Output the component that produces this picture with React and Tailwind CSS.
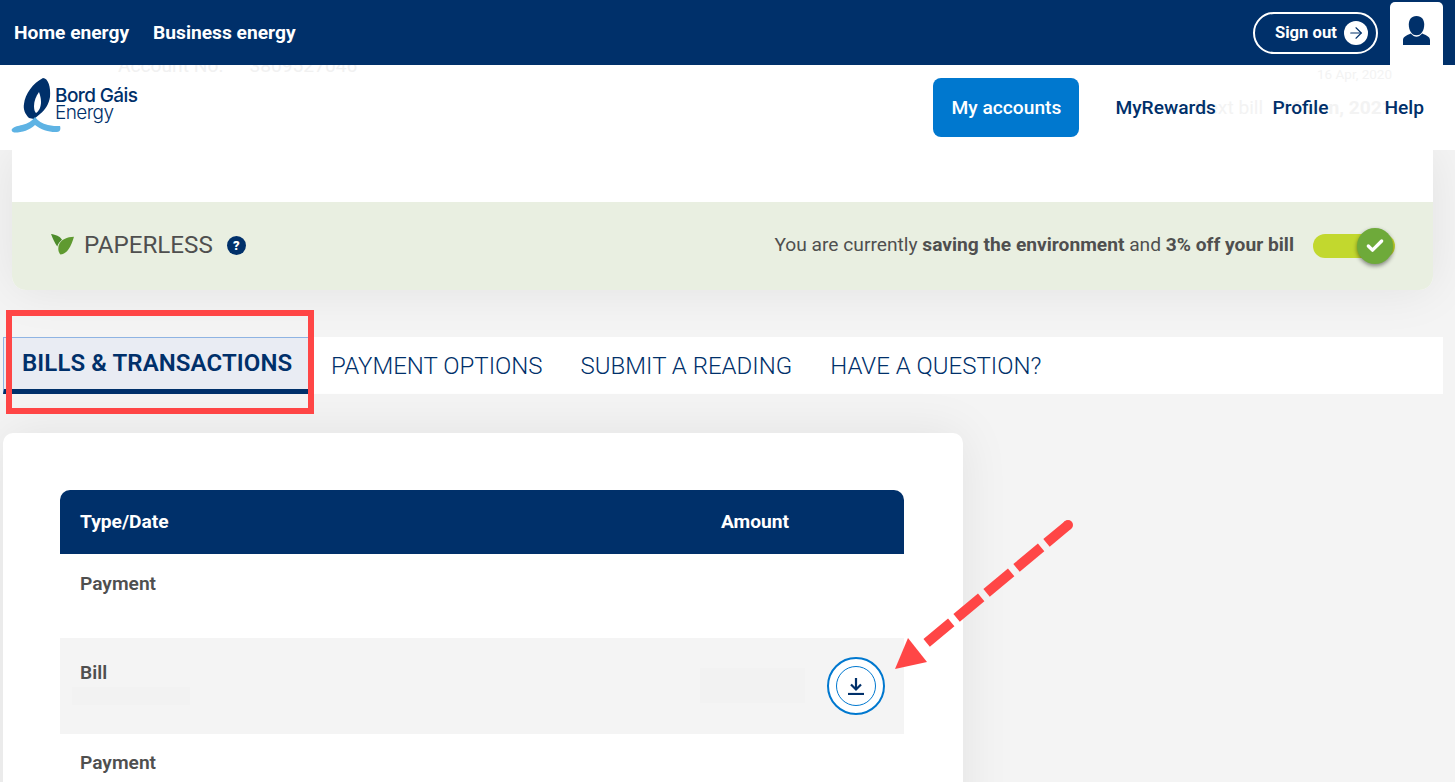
import { ArrowRight, Check } from "lucide-react";

const tabs = ["PAYMENT OPTIONS", "SUBMIT A READING", "HAVE A QUESTION?"];

function Logo() {
  return (
    <div className="relative -mt-[5px] h-[60px] w-[130px] shrink-0">
      <svg viewBox="0 0 56 60" className="h-[60px] w-[56px]">
        <path d="M33 3 C38 3 41 12 40 22 C39 29 35 35 30 39 L24 44 L19 43 C15 39 13 34 14 29 C15 19 23 8 33 3 Z" fill="#00306a" />
        <path d="M29 17 C26 21 24 26 24 31 C24 35 25 37 26 38 C29 36 31 32 31 27 C31 23 30 20 29 17 Z" fill="#fff" />
        <path d="M2 54 C5 51 8 51 12 50 C18 48.500 22 46 25 42 C28 46 32 48.500 38 50 C42 51 46 51 50 51 C51 54 50 57 47 57 C40 57.500 31 55 25 50 C20 55 12 57.500 5 57.500 C2 57.500 1 55 2 54 Z" fill="#5eb3e4" />
      </svg>
      <div className="absolute left-[45px] top-[11px] font-['Inter',sans-serif] text-[19px] leading-[19px] tracking-[-0.6px] text-[#00306a]">
        <div className="font-medium">Bord Gáis</div>
        <div className="-mt-[2px] font-light">Energy</div>
      </div>
    </div>
  );
}

function TopBar() {
  return (
    <div className="flex h-[65px] items-center justify-between bg-[#00306a] pl-[14px] pr-[12px]">
      <div className="flex gap-[24px] pt-[2px] text-[19.2px] font-bold text-white">
        <span>Home energy</span>
        <span>Business energy</span>
      </div>
      <div className="flex h-full items-center gap-[12px]">
        <div className="flex h-[42px] w-[125px] items-center justify-between rounded-full border-2 border-white pl-[20px] pr-[8px] text-[16.6px] font-bold text-white">
          <span className="pt-[2px]">Sign out</span>
          <span className="flex h-[24px] w-[24px] items-center justify-center rounded-full bg-white text-[#00306a]">
            <ArrowRight size={18} strokeWidth={1.5} />
          </span>
        </div>
        <div className="mt-[2px] flex h-[63px] w-[53px] justify-center rounded-t-[5px] bg-white pt-[14px]">
          <svg viewBox="0 0 28 30" className="h-[29px] w-[27px]" fill="#00306a">
            <path d="M14 0 C19.500 0 22 4 22 9 C22 14 19.500 20 14 20 C8.500 20 6 14 6 9 C6 4 8.500 0 14 0 Z" />
            <path d="M0 25 C0 21 4 20 8 18 C10 20 12 21.500 14 21.500 C16 21.500 18 20 20 18 C24 20 28 21 28 25 L28 30 L0 30 Z" />
          </svg>
        </div>
      </div>
    </div>
  );
}

function NavBar() {
  return (
    <div className="relative z-10 flex h-[85px] items-center justify-between overflow-hidden bg-white pl-[10px] pr-[31px] text-[19.2px] font-medium text-[#00306a]">
      <span className="absolute left-[118px] -top-[11px] text-[19.2px] leading-[24px] font-normal text-[#f1f1f1]">
        Account No.
        <span className="ml-[26px]">3809527046</span>
      </span>
      <span className="absolute left-[1317px] -top-[1px] text-[13.5px] font-normal text-[#f3f3f3]">16 Apr, 2020</span>
      <span className="absolute left-[1194px] top-[29px] font-normal text-[#f3f3f3]">
        Next bill
        <span className="ml-[17px] font-bold">16 Jun, 2021</span>
      </span>
      <Logo />
      <div className="relative flex items-center pt-[2px]">
        <span className="-mt-[2px] flex h-[59px] w-[146px] items-center justify-center rounded-[8px] bg-[#0078cf] pt-[2px] text-white">
          My accounts
        </span>
        <span className="ml-[36px] w-[157px]">MyRewards</span>
        <span className="w-[112px]">Profile</span>
        <span>Help</span>
      </div>
    </div>
  );
}

function PaperlessCard() {
  return (
    <div className="ml-[12px] w-[1421px] rounded-b-[14px] bg-white shadow-[0_0_50px_rgba(0,0,0,0.08)]">
      <div className="h-[52px]" />
      <div className="flex h-[88px] items-center justify-between rounded-b-[14px] bg-[#e9efe1] pl-[39px] pr-[38px]">
        <div className="-mt-[2px] flex items-center text-[24.2px] text-[#4f4f4f]">
          <svg viewBox="0 0 24 22" className="mr-[10px] h-[21px] w-[23px]">
            <path d="M0 0 C5 1 9 2 11.500 6 C9 8 7.500 10 6.500 13 C3.500 9 2 5 0 0 Z" fill="#4d8c2b" />
            <path d="M24 3 C17 3 10 6 8 12 C7 16 8 20 10 21.500 C17 21 21 13 24 3 Z" fill="#5f9a30" />
          </svg>
          <span>PAPERLESS</span>
          <span className="ml-[14px] mt-[2px] flex h-[19px] w-[19px] items-center justify-center rounded-full bg-[#00306a] text-[13px] font-black text-white">
            ?
          </span>
        </div>
        <div className="-mt-[2px] flex items-center text-[19.2px] text-[#4f4f4f]">
          <span>
            You are currently <b className="font-bold">saving the environment</b> and{" "}
            <b className="font-bold">3% off your bill</b>
          </span>
          <div className="relative ml-[19px] mt-[2px] h-[24px] w-[82px] rounded-full bg-[#c2d82e]">
            <span className="absolute -top-[6px] right-[2px] flex h-[36px] w-[36px] items-center justify-center rounded-full bg-[#6eaa3a] text-white shadow-[0_2px_4px_rgba(0,0,0,0.45)]">
              <Check size={20} strokeWidth={4} />
            </span>
          </div>
        </div>
      </div>
    </div>
  );
}

function Tabs() {
  return (
    <div className="ml-[3px] mt-[47px] flex h-[57px] w-[1440px] items-start bg-white text-[24px] font-light text-[#00306a]">
      <div className="flex h-[57px] w-[305px] items-center border-b-[5px] border-l border-t border-b-[#00306a] border-l-[#8fb4e3] border-t-[#8fb4e3] bg-[#e9ecf3] pb-[2px] pl-[18px] font-semibold tracking-[0.1px]">
        BILLS &amp; TRANSACTIONS
      </div>
      <div className="flex h-[56px] items-center gap-[38px] pl-[23px] pt-[2px]">
        {tabs.map((tab) => (
          <span key={tab}>{tab}</span>
        ))}
      </div>
    </div>
  );
}

function Transactions() {
  return (
    <div className="ml-[3px] mt-[39px] h-[400px] w-[960px] rounded-t-[10px] bg-white pl-[57px] pr-[59px] pt-[57px] text-[19.2px] shadow-[0_0_50px_rgba(0,0,0,0.08)]">
      <div className="flex h-[64px] items-center rounded-t-[10px] bg-[#00306a] pl-[20px] font-bold text-white">
        <span className="w-[641px]">Type/Date</span>
        <span>Amount</span>
      </div>
      <div className="h-[84px] pl-[20px] pt-[16px] font-semibold text-[#4f4f4f]">Payment</div>
      <div className="relative flex h-[96px] justify-between bg-[#f4f4f4] pl-[20px] pt-[21px] font-semibold text-[#4f4f4f]">
        <span>Bill</span>
        <span className="absolute left-[12px] top-[49px] h-[18px] w-[118px] bg-[#f2f2f2]" />
        <span className="absolute left-[640px] top-[30px] h-[35px] w-[105px] bg-[#f2f2f2]" />
        <div className="absolute left-[767px] top-[19px] flex h-[58px] w-[58px] items-center justify-center rounded-full border-2 border-[#0078cf] bg-white">
          <div className="flex h-[40px] w-[40px] items-center justify-center rounded-full border border-[#0078cf]">
            <svg viewBox="0 0 18 18" className="h-[18px] w-[18px]" fill="none" stroke="#00306a" strokeWidth="2.200">
              <path d="M9 1 V12" />
              <path d="M4 7.500 L9 12.500 L14 7.500" />
              <path d="M1 17 H17" />
            </svg>
          </div>
        </div>
      </div>
      <div className="pl-[20px] pt-[15px] font-semibold text-[#4f4f4f]">Payment</div>
    </div>
  );
}

export default function App() {
  return (
    <div className="relative h-[782px] w-[1455px] overflow-hidden bg-[#f4f4f4] font-['Roboto',sans-serif]">
      <TopBar />
      <NavBar />
      <PaperlessCard />
      <Tabs />
      <Transactions />

      {/* annotations drawn over the screenshot */}
      <div className="absolute left-[6px] top-[310px] h-[104px] w-[308px] border-[6px] border-[#ff4646]" />
      <svg viewBox="0 0 1455 782" className="pointer-events-none absolute left-0 top-0 h-[782px] w-[1455px]">
        <path d="M1068 525 L924 645" stroke="#ff4646" strokeWidth="10" strokeDasharray="28 7 32 7 32 7 32 7 32" fill="none" />
        <circle cx="1068" cy="525" r="5" fill="#ff4646" />
        <path d="M895 669 L908 638 L927 662 Z" fill="#ff4646" />
      </svg>
    </div>
  );
}
